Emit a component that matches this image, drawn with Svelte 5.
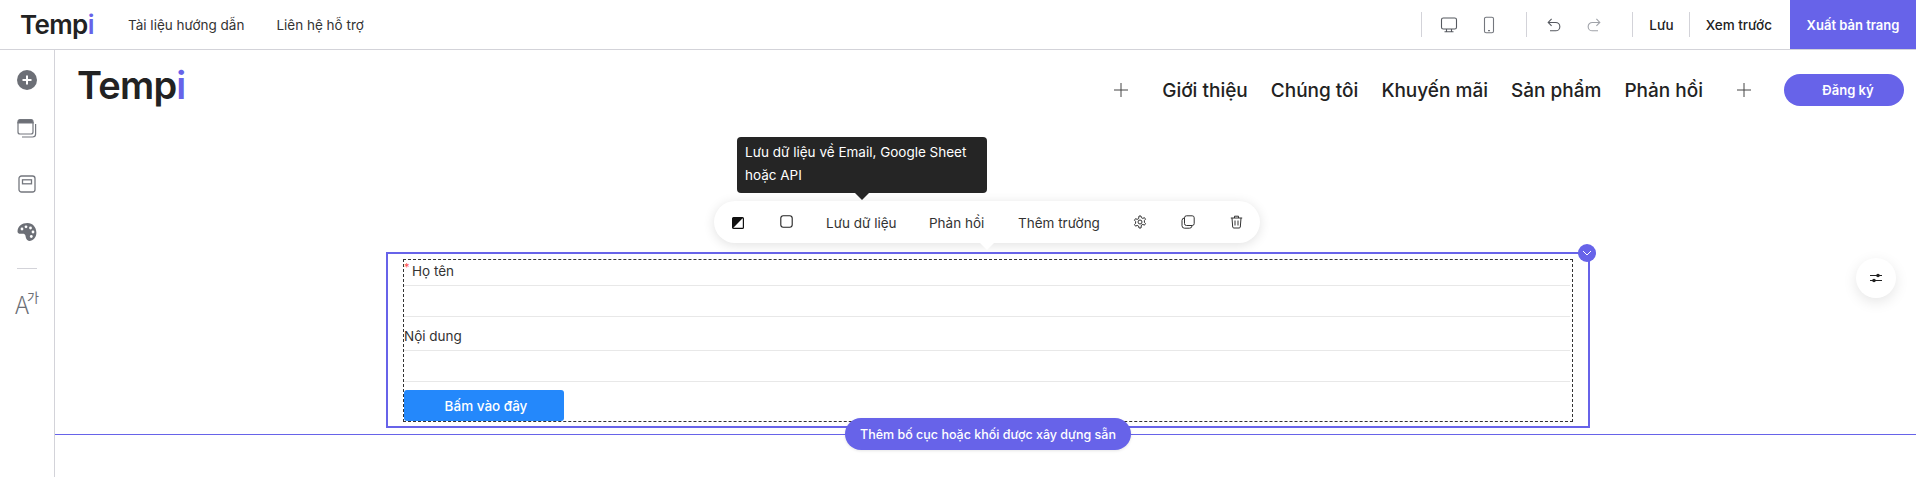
<script lang="ts">
  const topLinks = ['Tài liệu hướng dẫn', 'Liên hệ hỗ trợ'];
  const navItems = ['Giới thiệu', 'Chúng tôi', 'Khuyến mãi', 'Sản phẩm', 'Phản hồi'];
</script>

<div class="app">
  <header class="topbar">
    <div class="brand">Temp<span class="dot-i">i</span></div>
    <nav class="top-links">
      {#each topLinks as link (link)}
        <span>{link}</span>
      {/each}
    </nav>

    <div class="top-actions">
      <span class="sep"></span>
      <div class="icon-group devices">
        <svg width="18" height="18" viewBox="0 0 18 18" fill="none" stroke="#55585f" stroke-width="1.1">
          <rect x="1.5" y="2" width="15" height="11" rx="1.8" />
          <path d="M6.5 13v2.5M11.5 13v2.5M4.5 15.8h9" />
        </svg>
        <svg width="12" height="18" viewBox="0 0 12 18" fill="none" stroke="#74777e" stroke-width="1.1">
          <rect x="1.5" y="1.2" width="9" height="15.6" rx="1.6" />
          <path d="M5 14.6h2" />
        </svg>
      </div>
      <span class="sep"></span>
      <div class="icon-group history">
        <svg width="14" height="16" viewBox="0 0 14 16" fill="none" stroke="#55585f" stroke-width="1.1">
          <path d="M1.5 5.5h7.2a4 4 0 0 1 0 8.3H3M4.6 1.8 1.2 5.5l3.4 3.4" />
        </svg>
        <svg width="14" height="16" viewBox="0 0 14 16" fill="none" stroke="#a0a3a9" stroke-width="1.1">
          <path d="M12.5 5.5H5.3a4 4 0 0 0 0 8.3H11M9.4 1.8l3.4 3.7-3.4 3.4" />
        </svg>
      </div>
      <span class="sep"></span>
      <button class="text-btn save">Lưu</button>
      <span class="sep"></span>
      <button class="text-btn preview">Xem trước</button>
      <button class="publish">Xuất bản trang</button>
    </div>
  </header>

  <div class="workspace">
    <aside class="sidebar">
      <svg class="s1" width="20" height="20" viewBox="0 0 20 20">
        <circle cx="10" cy="10" r="10" fill="#6c6f76" />
        <path d="M10 5.5v9M5.500 10h9" stroke="#fff" stroke-width="2" />
      </svg>
      <svg class="s2" width="20" height="20" viewBox="0 0 20 20" fill="none" stroke="#74777e" stroke-width="1.2">
        <path d="M1 3.5a2 2 0 0 1 2-2h11a2 2 0 0 1 2 2V5H1z" fill="#6c6f76" />
        <path d="M1 4v10a2 2 0 0 0 2 2h11a2 2 0 0 0 2-2V4" />
        <path d="M18.600 6v10a3 3 0 0 1-3 3H5" />
      </svg>
      <svg class="s3" width="18" height="18" viewBox="0 0 18 18" fill="none" stroke="#74777e" stroke-width="1.3">
        <rect x="1" y="1" width="16" height="16" rx="2.5" />
        <rect x="4.5" y="4.8" width="9" height="4" />
      </svg>
      <svg class="s4" width="20" height="20" viewBox="0 0 20 20">
        <path d="M10.500 1C5 1 .5 4.500.5 9.400c0 1.900 1.700 2.600 3.500 2.400 2.500-.3 4-.2 4.400 1.800.4 2.200 1.200 5.400 4 5.400 3.800 0 7-3.800 7-8.200C19.400 5 15.500 1 10.500 1z" fill="#6c6f76" />
        <circle cx="9" cy="4.800" r="1.400" fill="#fff" />
        <circle cx="13.500" cy="6" r="1.400" fill="#fff" />
        <circle cx="16" cy="10" r="1.400" fill="#fff" />
        <circle cx="14.300" cy="14.500" r="1.400" fill="#fff" />
        <circle cx="5" cy="7" r="1.400" fill="#fff" />
      </svg>
      <span class="side-sep"></span>
      <span class="s5">A<sup>가</sup></span>
    </aside>

    <main class="canvas">
      <div class="page-header">
        <div class="page-logo">Temp<span class="dot-i">i</span></div>
        <div class="page-nav">
          <svg class="plus" width="14" height="14" viewBox="0 0 14 14" stroke="#444" stroke-width="1">
            <path d="M7 0v14M0 7h14" />
          </svg>
          {#each navItems as item (item)}
            <span class="nav-item">{item}</span>
          {/each}
          <svg class="plus last" width="14" height="14" viewBox="0 0 14 14" stroke="#444" stroke-width="1">
            <path d="M7 0v14M0 7h14" />
          </svg>
          <button class="signup">Đăng ký</button>
        </div>
      </div>

      <section class="section">
        <div class="frame">
          <div class="form-box">
            <div class="field">
              <div class="label first"><i>*</i>Họ tên</div>
              <div class="input"></div>
            </div>
            <div class="field">
              <div class="label">Nội dung</div>
              <div class="input"></div>
            </div>
            <button class="submit">Bấm vào đây</button>
          </div>

          <div class="tooltip">Lưu dữ liệu về Email, Google Sheet hoặc API</div>

          <div class="toolbar">
            <svg class="t-contrast" width="12" height="12" viewBox="0 0 12 12">
              <rect x=".6" y=".6" width="10.800" height="10.800" rx="1" fill="#fff" stroke="#111" stroke-width="1.200" />
              <path d="M.6 11.400V1.600a1 1 0 0 1 1-1h9.800z" fill="#111" />
            </svg>
            <svg class="t-square" width="13" height="13" viewBox="0 0 13 13" fill="none" stroke="#222" stroke-width="1.100">
              <rect x=".8" y=".8" width="11.400" height="11.400" rx="2.500" />
            </svg>
            <span class="t-save">Lưu dữ liệu</span>
            <span class="t-reply">Phản hồi</span>
            <span class="t-add">Thêm trường</span>
            <svg class="t-gear" width="14" height="14" viewBox="0 0 14 14" fill="none" stroke="#333" stroke-width="1">
              <path d="M6 1h2l.4 1.700 1.500.700 1.500-.800 1.100 1.600-1.100 1.300v1.800l1.100 1.300-1.100 1.600-1.500-.8-1.500.7L8 13H6l-.4-1.900-1.500-.7-1.500.8-1.100-1.600 1.100-1.300V6.500L1.500 5.200l1.100-1.600 1.500.8 1.500-.7z" />
              <circle cx="7" cy="7" r="2" />
            </svg>
            <svg class="t-copy" width="14" height="14" viewBox="0 0 14 14" fill="none" stroke="#333" stroke-width="1">
              <rect x="3.500" y=".8" width="9.700" height="9.700" rx="2" />
              <path d="M3.500 3A2.500 2.500 0 0 0 1 5.500v5.200A2.500 2.500 0 0 0 3.500 13.200h5A2.500 2.500 0 0 0 11 11" />
            </svg>
            <svg class="t-trash" width="13" height="14" viewBox="0 0 13 14" fill="none" stroke="#333" stroke-width="1">
              <path d="M.8 3h11.400M4.500 3V1.200h4V3M2 3l.7 9a1.200 1.200 0 0 0 1.200 1h5.200a1.200 1.200 0 0 0 1.200-1l.7-9M5 5.500v5M8 5.500v5" />
            </svg>
          </div>

          <span class="collapse">
            <svg width="10" height="6" viewBox="0 0 10 6" fill="none" stroke="#fff" stroke-width="1">
              <path d="M1 1l4 4 4-4" />
            </svg>
          </span>
          <button class="add-block">Thêm bố cục hoặc khối được xây dựng sẵn</button>
        </div>
      </section>

      <button class="float-settings" aria-label="settings">
        <svg width="14" height="12" viewBox="0 0 14 12" fill="none" stroke="#222" stroke-width="1">
          <path d="M1 3.500h12M1 8.500h12" />
          <circle cx="9" cy="3.500" r="1.800" fill="#222" stroke="none" />
          <circle cx="5" cy="8.500" r="1.800" fill="#222" stroke="none" />
        </svg>
      </button>
    </main>
  </div>
</div>

<style>
  :global(body) {
    margin: 0;
    background: #fff;
    font-family: Inter, "Noto Sans", sans-serif;
    color: #222;
  }

  button {
    font-family: inherit;
    border: 0;
    padding: 0;
    background: none;
  }

  .app {
    height: 477px;
    display: flex;
    flex-direction: column;
    overflow: hidden;
  }

  .dot-i { color: #6763e9; }

  /* thanh trên */
  .topbar {
    height: 49px;
    box-sizing: content-box;
    border-bottom: 1px solid #d3d3d9;
    display: flex;
    align-items: center;
    flex-shrink: 0;
  }
  .brand {
    margin-left: 20px;
    font-size: 26px;
    font-weight: 600;
    letter-spacing: -0.6px;
    color: #222;
    width: 108px;
  }
  .top-links {
    display: flex;
    gap: 32px;
    font-size: 13.5px;
    color: #333;
  }
  .top-actions {
    margin-left: auto;
    display: flex;
    align-items: center;
    height: 100%;
  }
  .sep {
    width: 1px;
    height: 25px;
    background: #d3d3d9;
  }
  .icon-group {
    display: flex;
    align-items: center;
  }
  .devices { gap: 25px; padding: 0 31px 0 18px; }
  .history { gap: 26px; padding: 0 31px 0 20px; }
  .text-btn {
    font-size: 13.5px;
    font-weight: 500;
    color: #222;
  }
  .save { padding: 0 15px 0 16px; }
  .preview { padding: 0 18px 0 16px; }
  .publish {
    width: 126px;
    height: 49px;
    background: #6763e9;
    color: #fff;
    font-size: 13px;
    font-weight: 600;
  }

  .workspace {
    flex: 1;
    display: flex;
    min-height: 0;
  }

  /* thanh bên */
  .sidebar {
    width: 54px;
    border-right: 1px solid #d3d3d9;
    display: flex;
    flex-direction: column;
    align-items: center;
    flex-shrink: 0;
  }
  .s1 { margin-top: 20px; }
  .s2 { margin-top: 28px; }
  .s3 { margin-top: 37px; }
  .s4 { margin-top: 29px; }
  .side-sep {
    width: 20px;
    height: 1px;
    background: #d3d3d9;
    margin-top: 26px;
  }
  .s5 {
    margin-top: 21px;
    font-size: 24px;
    line-height: 28px;
    color: #6c6f76;
    font-weight: 300;
    font-family: "Noto Sans CJK KR", Inter, sans-serif;
    display: flex;
  }
  .s5 sup {
    font-size: 13px;
    line-height: 14px;
    margin-left: -2px;
    font-weight: 400;
  }

  /* trang */
  .canvas {
    flex: 1;
    position: relative;
    min-width: 0;
  }
  .page-header {
    height: 80px;
    padding: 0 12px 0 22px;
    display: flex;
    align-items: center;
    justify-content: space-between;
  }
  .page-logo {
    font-size: 38px;
    font-weight: 600;
    letter-spacing: -0.8px;
    line-height: 46px;
    margin-top: -10px;
    color: #222;
  }
  .page-nav {
    display: flex;
    align-items: center;
    gap: 23px;
  }
  .nav-item {
    font-size: 19px;
    font-weight: 500;
    color: #222;
  }
  .plus { margin-right: 11px; }
  .plus.last { margin: 0 10px 0 11px; }
  .signup {
    width: 120px;
    height: 32px;
    padding-left: 8px;
    border-radius: 16px;
    background: #6763e9;
    color: #fff;
    font-size: 13px;
    font-weight: 600;
  }

  .section {
    margin-top: 122px;
    padding: 0 0 6px 331px;
    border-bottom: 1px solid #6763e9;
  }
  .frame {
    position: relative;
    width: 1204px;
    height: 176px;
    box-sizing: border-box;
    border: 2px solid #6763e9;
    padding: 5px 15px 4px;
  }
  .form-box {
    height: 163px;
    box-sizing: border-box;
    border: 1px dashed #333;
  }
  .field {
    margin-right: 2px;
  }
  .label {
    height: 23px;
    padding-top: 2px;
    font-size: 13.5px;
    line-height: 19px;
    color: #333;
    border-bottom: 1px solid #e8e8e8;
    box-sizing: content-box;
  }
  .label.first { padding-left: 8px; position: relative; }
  .label i {
    position: absolute;
    left: 0;
    top: 1px;
    color: #ff4d4f;
    font-style: normal;
    font-size: 11px;
    line-height: 12px;
  }
  .field + .field .label { margin-top: 8px; }
  .input {
    height: 30px;
    border-bottom: 1px solid #e8e8e8;
  }
  .submit {
    display: block;
    margin-top: 8px;
    width: 160px;
    height: 31px;
    padding-left: 4px;
    border-radius: 3px;
    background: #2488fb;
    color: #fff;
    font-size: 13.5px;
    font-weight: 500;
  }

  .tooltip {
    position: absolute;
    left: 349px;
    top: -117px;
    width: 250px;
    height: 56px;
    box-sizing: border-box;
    padding: 4px 8px;
    border-radius: 4px;
    background: #252525;
    color: #fff;
    font-size: 13.5px;
    line-height: 23px;
    z-index: 2;
  }
  .tooltip::after {
    content: "";
    position: absolute;
    left: 118px;
    bottom: -7px;
    border: 7px solid transparent;
    border-bottom: 0;
    border-top-color: #252525;
  }

  .toolbar {
    position: absolute;
    left: 326px;
    top: -53px;
    width: 546px;
    height: 42px;
    border-radius: 21px;
    background: #fff;
    box-shadow: 0 2px 12px rgba(0, 0, 0, 0.12);
    font-size: 13.5px;
    color: #333;
    z-index: 1;
  }
  .toolbar::after {
    content: "";
    position: absolute;
    left: 266px;
    bottom: -7px;
    border: 7px solid transparent;
    border-bottom: 0;
    border-top-color: #fff;
  }
  .toolbar > * { position: absolute; }
  .t-contrast { left: 18px; top: 16px; }
  .t-square { left: 66px; top: 14px; }
  .t-save { left: 112px; top: 14px; }
  .t-reply { left: 215px; top: 14px; }
  .t-add { left: 304px; top: 14px; }
  .t-gear { left: 419px; top: 14px; }
  .t-copy { left: 467px; top: 14px; }
  .t-trash { left: 516px; top: 14px; }

  .collapse {
    position: absolute;
    right: -8px;
    top: -10px;
    width: 18px;
    height: 18px;
    border-radius: 50%;
    background: #6763e9;
    display: flex;
    align-items: center;
    justify-content: center;
  }
  .add-block {
    position: absolute;
    left: 50%;
    top: 164px;
    transform: translateX(-50%);
    width: 286px;
    height: 32px;
    border-radius: 16px;
    background: #6763e9;
    color: #fff;
    font-size: 12.5px;
    font-weight: 500;
    box-shadow: 0 1px 3px rgba(0, 0, 0, 0.1);
    z-index: 2;
  }

  .float-settings {
    position: absolute;
    right: 20px;
    top: 208px;
    width: 40px;
    height: 40px;
    border-radius: 50%;
    background: #fff;
    box-shadow: 0 4px 14px rgba(0, 0, 0, 0.1);
    display: flex;
    align-items: center;
    justify-content: center;
  }
</style>
